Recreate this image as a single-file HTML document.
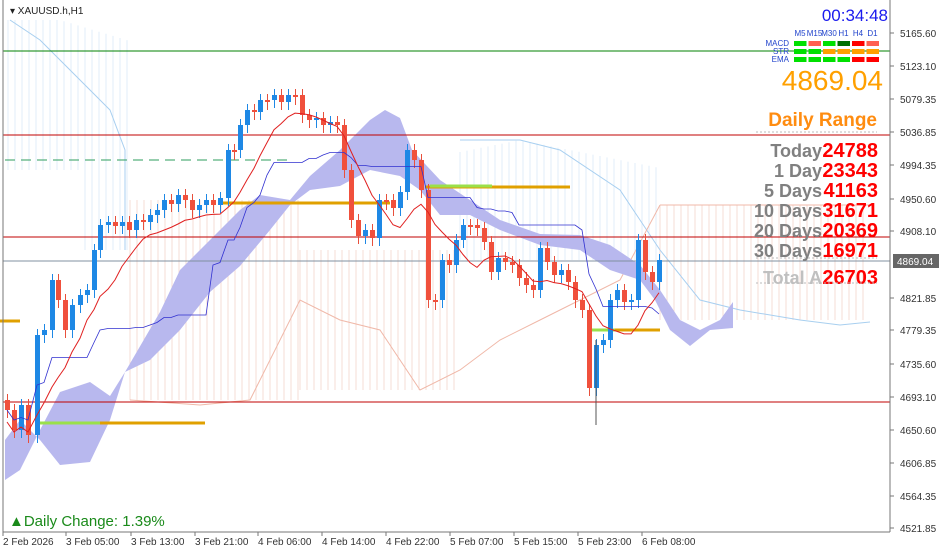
<!DOCTYPE html><html><head><meta charset="utf-8"><style>
body{margin:0;width:939px;height:552px;background:#fff;overflow:hidden;font-family:"Liberation Sans",sans-serif}
svg{position:absolute;left:0;top:0}
.t{font-family:"Liberation Sans",sans-serif}
</style></head><body>
<svg id="s" width="939" height="552" xmlns="http://www.w3.org/2000/svg">
<g id="bg"></g>
<polygon fill="#b8b8ee" points="5,480 20,470 40,430 60,392 90,382 110,396 125,372 160,312 180,270 210,240 240,210 260,195 290,200 310,176 340,150 370,120 385,110 400,118 412,150 440,180 470,200 500,220 540,234 580,235 610,245 640,265 660,290 680,320 700,330 720,320 733,302 733,328 710,330 690,346 670,330 655,300 640,280 610,270 580,250 540,245 500,230 470,215 440,215 420,190 400,176 370,170 340,186 310,190 290,205 270,230 240,266 210,292 180,330 150,360 125,372 110,420 90,462 60,465 40,440 20,420 5,440"/>
<g id="lines"></g>
<g id="c"></g>
</svg>
<script>
var s=document.getElementById('s'),bg=document.getElementById('bg'),L=document.getElementById('lines'),C=document.getElementById('c'),NS='http://www.w3.org/2000/svg';
function el(p,t,a,txt){var e=document.createElementNS(NS,t);for(var k in a)e.setAttribute(k,a[k]);if(txt)e.textContent=txt;p.appendChild(e);return e}
for(var x=8;x<130;x+=7)el(bg,'line',{x1:x,x2:x,y1:20+Math.max(0,(x-60))*0.3,y2:170+(x>80?80:0),stroke:'#e2eef9','stroke-width':1});
for(var x=130;x<300;x+=7)el(bg,'line',{x1:x,x2:x,y1:200,y2:400,stroke:'#f5dcd6','stroke-width':1});
for(var x=300;x<460;x+=7)el(bg,'line',{x1:x,x2:x,y1:250,y2:390,stroke:'#f5dcd6','stroke-width':1});
for(var x=460;x<660;x+=7)el(bg,'line',{x1:x,x2:x,y1:140+Math.abs(x-520)*0.2,y2:260,stroke:'#e2eef9','stroke-width':1});
for(var x=660;x<870;x+=7)el(bg,'line',{x1:x,x2:x,y1:205,y2:320,stroke:'#f5dcd6','stroke-width':1});
el(bg,'polyline',{points:'660,205 690,205 740,205 800,205 870,205',fill:'none',stroke:'#f0b8a8'});
el(bg,'polyline',{points:'460,140 520,140 560,150 620,190 660,250 700,300 740,310 800,320 840,325 870,322',fill:'none',stroke:'#a8cff0'});
el(bg,'polyline',{points:'10,20 40,40 60,60 90,90 110,110 125,150 125,250',fill:'none',stroke:'#a8cff0'});
el(bg,'polyline',{points:'130,400 200,405 250,400 300,300 340,320 380,330 420,390 460,370 500,340 540,320 580,300 620,280 660,205',fill:'none',stroke:'#f0b8a8'});
[[51,'#008000'],[135,'#c00000'],[237,'#c00000'],[261,'#8090a0'],[402,'#c00000']].forEach(function(a){el(L,'line',{x1:3,x2:890,y1:a[0],y2:a[0],stroke:a[1]})});
el(L,'line',{x1:5,x2:290,y1:160,y2:160,stroke:'#2e9e5e','stroke-dasharray':'10,6'});
[[187,425,570],[203,220,390],[330,590,660],[423,40,205],[321,0,20]].forEach(function(a){el(L,'line',{x1:a[1],x2:a[2],y1:a[0],y2:a[0],stroke:'#e0a000','stroke-width':3})});
[[186,430,492],[423,40,100],[330,590,615]].forEach(function(a){el(L,'line',{x1:a[1],x2:a[2],y1:a[0],y2:a[0],stroke:'#9ae04a','stroke-width':3})});
var cl=[[5,410],[12,430],[19,405],[26,435],[35,335],[42,330],[50,280],[56,300],[63,330],[70,305],[78,295],[85,290],[92,250],[98,225],[106,222],[113,226],[120,222],[127,230],[134,220],[141,222],[148,215],[155,210],[162,200],[169,204],[176,195],[183,200],[190,210],[197,205],[204,200],[211,205],[218,198],[226,150],[232,150],[238,125],[245,110],[252,112],[258,100],[265,100],[272,95],[279,102],[286,95],[293,95],[300,115],[307,120],[314,118],[321,125],[328,122],[335,125],[342,170],[349,220],[356,236],[363,230],[370,238],[377,200],[384,200],[391,208],[398,192],[405,150],[412,160],[419,190],[426,300],[433,300],[440,260],[447,265],[454,240],[461,225],[468,225],[475,228],[482,242],[489,272],[496,258],[503,262],[510,265],[517,278],[524,285],[531,290],[538,248],[545,262],[552,275],[559,270],[566,282],[573,300],[580,310],[587,388],[594,345],[601,340],[608,300],[615,290],[622,302],[629,300],[636,240],[643,272],[650,282],[657,260]];
var py=cl[0][1]-10,red=[],blue=[];
cl.forEach(function(c,i){var o=py,cc=c[1],up=cc<o,t=Math.min(o,cc),b=Math.max(o,cc);if(b-t<2)b=t+2;
el(C,'line',{x1:c[0]+2.5,x2:c[0]+2.5,y1:t-6,y2:b+8,stroke:up?'#1e88e5':'#e8503c'});
el(C,'rect',{x:c[0],y:t,width:5,height:b-t,fill:up?'#1e88e5':'#f0503c'});
var sm=0,n=0;for(var j=Math.max(0,i-7);j<=i;j++){sm+=cl[j][1];n++}red.push((c[0]+2)+','+(sm/n+12));
var mn=1e9,mx=-1e9;for(var j=Math.max(0,i-25);j<=i;j++){mn=Math.min(mn,cl[j][1]);mx=Math.max(mx,cl[j][1])}blue.push((c[0]+2)+','+((mn+mx)/2));
py=cc;});
el(C,'polyline',{points:blue.join(' '),fill:'none',stroke:'#3030d0','stroke-width':0.8});
el(C,'polyline',{points:red.join(' '),fill:'none',stroke:'#e02020','stroke-width':1});
el(C,'line',{x1:596,x2:596,y1:340,y2:425,stroke:'#555'});
el(s,'line',{x1:890,x2:890,y1:0,y2:532,stroke:'#777'});
el(s,'line',{x1:3,x2:890,y1:532,y2:532,stroke:'#777'});
el(s,'line',{x1:3,x2:3,y1:0,y2:532,stroke:'#777'});
[['5165.60',33],['5123.10',66],['5079.35',99],['5036.85',132],['4994.35',165],['4950.60',199],['4908.10',231],['4821.85',298],['4779.35',330],['4735.60',364],['4693.10',397],['4650.60',430],['4606.85',463],['4564.35',496],['4521.85',528]].forEach(function(a){el(s,'line',{x1:890,x2:894,y1:a[1],y2:a[1],stroke:'#777'});el(s,'text',{x:900,y:a[1]+4,'font-size':10,fill:'#333',class:'t'},a[0])});
el(s,'rect',{x:893,y:254,width:46,height:14,fill:'#666'});el(s,'text',{x:897,y:265,'font-size':10,fill:'#fff',class:'t'},'4869.04');
[['2 Feb 2026',3],['3 Feb 05:00',66],['3 Feb 13:00',131],['3 Feb 21:00',195],['4 Feb 06:00',258],['4 Feb 14:00',322],['4 Feb 22:00',386],['5 Feb 07:00',450],['5 Feb 15:00',514],['5 Feb 23:00',578],['6 Feb 08:00',642]].forEach(function(a){el(s,'line',{x1:a[1],x2:a[1],y1:532,y2:536,stroke:'#777'});el(s,'text',{x:a[1],y:545,'font-size':10,fill:'#333',class:'t'},a[0])});
el(s,'text',{x:10,y:14,'font-size':10,fill:'#222',class:'t'},'▾ XAUUSD.h,H1');
el(s,'text',{x:9,y:526,'font-size':15,fill:'#1a8a1a',class:'t'},'▲Daily Change: 1.39%');
el(s,'text',{x:888,y:21,'font-size':17,fill:'#1a1aee','text-anchor':'end',class:'t'},'00:34:48');
['M5','M15','M30','H1','H4','D1'].forEach(function(t,i){el(s,'text',{x:800+i*14.5,y:36,'font-size':8,fill:'#2244cc','text-anchor':'middle',class:'t'},t)});
var cols=[['#00e000','#ff6050','#00e000','#007000','#ff0000','#ff6050'],['#00e000','#00e000','#ffa000','#ffa000','#ffa000','#ffa000'],['#00e000','#00e000','#00e000','#00e000','#ff0000','#ff0000']];
['MACD','STR','EMA'].forEach(function(t,r){el(s,'text',{x:789,y:46+r*8,'font-size':8,fill:'#2244cc','text-anchor':'end',class:'t'},t);for(var i=0;i<6;i++)el(s,'rect',{x:794+i*14.5,y:41+r*8,width:12.5,height:5,fill:cols[r][i]});});
el(s,'text',{x:883,y:90,'font-size':28,fill:'#ffa000','text-anchor':'end',class:'t'},'4869.04');
el(s,'text',{x:877,y:126,'font-size':19,fill:'#ff8c10','text-anchor':'end','font-weight':'bold',class:'t'},'Daily Range');
el(s,'line',{x1:756,x2:877,y1:132,y2:132,stroke:'#bbb','stroke-dasharray':'2,2'});
[['Today','24788',151],['1 Day','23343',171],['5 Days','41163',191],['10 Days','31671',211],['20 Days','20369',231],['30 Days','16971',251],['Total A','26703',278]].forEach(function(a,i){el(s,'text',{x:822,y:a[2]+6,'font-size':18,fill:i==6?'#c0c0c0':'#808080','text-anchor':'end','font-weight':'bold',class:'t'},a[0]);el(s,'text',{x:878,y:a[2]+6,'font-size':20,fill:'#ff0000','text-anchor':'end','font-weight':'bold',class:'t'},a[1]);});
el(s,'line',{x1:756,x2:877,y1:258,y2:258,stroke:'#bbb','stroke-dasharray':'2,2'});
el(s,'line',{x1:756,x2:877,y1:283,y2:283,stroke:'#bbb','stroke-dasharray':'2,2'});
</script>
</body></html>
